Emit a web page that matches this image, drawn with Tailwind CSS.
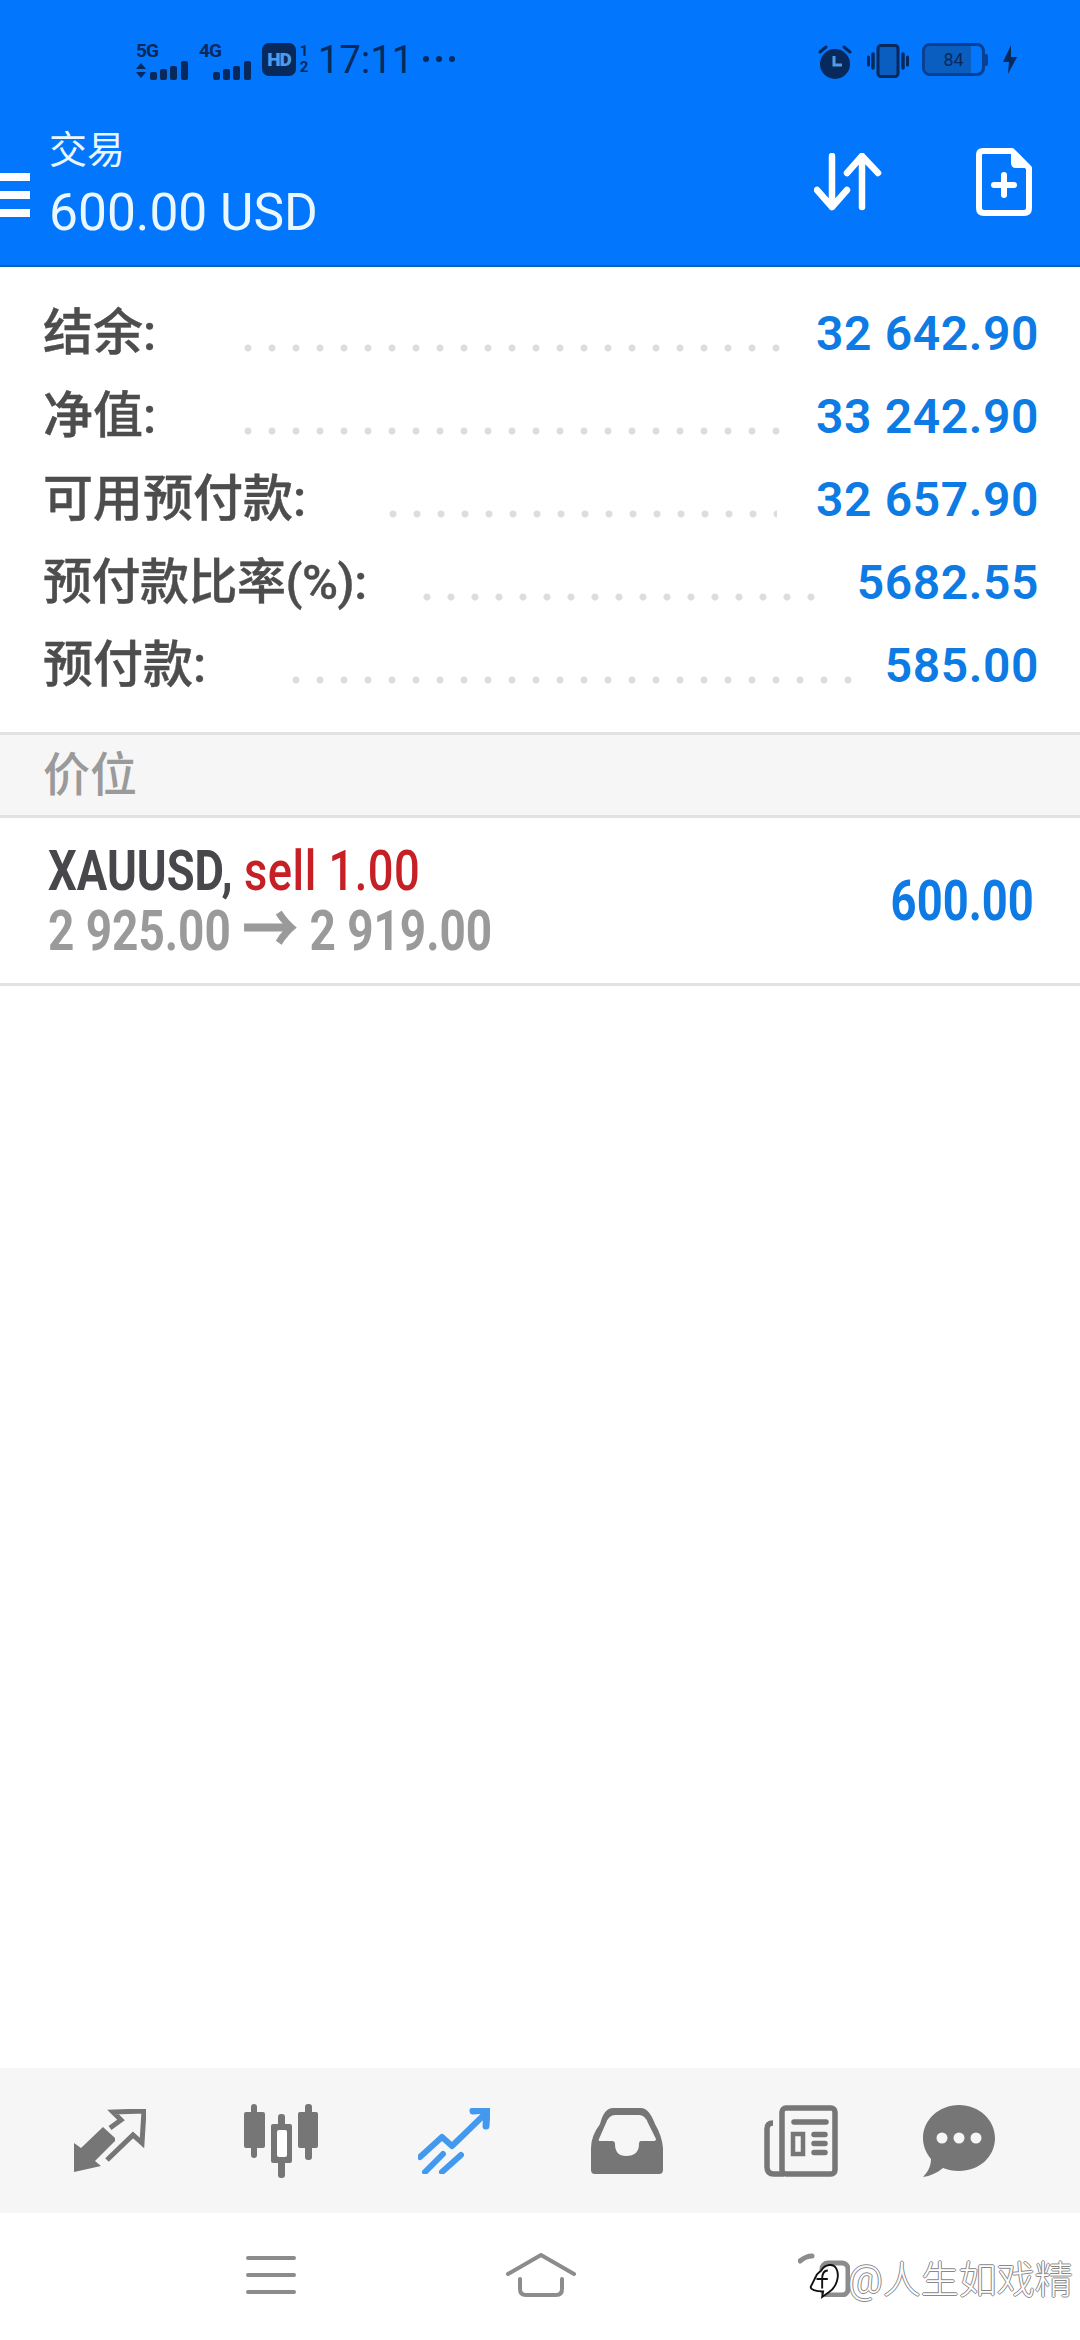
<!DOCTYPE html>
<html lang="zh">
<head>
<meta charset="utf-8">
<title>交易</title>
<script src="https://cdn.jsdelivr.net/npm/@tailwindcss/browser@4"></script>
</head>
<body class="m-0 bg-white">
<div class="w-[1080px] h-[2340px] flex flex-col overflow-hidden relative [font-family:Roboto,'Noto_Sans_CJK_SC',sans-serif]">

	<!-- blue header with status bar -->
	<div class="h-[267px] bg-[#0276fc] border-b-2 border-[#0a62b8] flex flex-col shrink-0">
		<div class="h-[120px] pt-[42px] pl-[136px] pr-[62px] flex justify-between items-start text-[#08295c]">
			<div class="flex items-start">
				<div class="w-[56px] flex flex-col">
					<span class="text-[19px] leading-[17px] font-bold tracking-[-1px] h-[18px]">5G</span>
					<svg width="56" height="20" viewBox="0 0 56 20" fill="#08295c" class="mt-[1px]">
						<path d="M0 8 5 2 10 8ZM0 11 5 17 10 11Z"/>
						<rect x="14" y="11" width="7" height="8" rx="2"/><rect x="24" y="8" width="7" height="11" rx="2"/><rect x="34" y="5" width="7" height="14" rx="2"/><rect x="45" y="0" width="7" height="19" rx="2"/>
					</svg>
				</div>
				<div class="w-[63px] ml-[7px] flex flex-col">
					<span class="text-[19px] leading-[17px] font-bold tracking-[-1px] h-[18px]">4G</span>
					<svg width="56" height="20" viewBox="0 0 56 20" fill="#08295c" class="mt-[1px]">
						<rect x="14" y="11" width="7" height="8" rx="2"/><rect x="24" y="8" width="7" height="11" rx="2"/><rect x="34" y="5" width="7" height="14" rx="2"/><rect x="45" y="0" width="7" height="19" rx="2"/>
					</svg>
				</div>
				<div class="w-[34px] h-[33px] mt-[1px] rounded-[7px] bg-[#08295c] text-[#4f9be8] text-[19px] font-black leading-[33px] text-center tracking-[-1px]">HD</div>
				<div class="w-[12px] ml-[2px] mt-[1px] flex flex-col text-[15px] leading-[16px] font-bold text-center"><span>1</span><span>2</span></div>
				<span class="ml-[8px] mt-[-4px] text-[38px] leading-[44px] tracking-[0.2px]">17:11</span>
				<div class="ml-[9px] mt-[14px] flex gap-[7px]">
					<span class="w-[6px] h-[6px] rounded-full bg-[#08295c]"></span>
					<span class="w-[6px] h-[6px] rounded-full bg-[#08295c]"></span>
					<span class="w-[6px] h-[6px] rounded-full bg-[#08295c]"></span>
				</div>
			</div>
			<div class="flex items-start">
				<svg width="34" height="34" viewBox="0 0 34 34" class="mt-[3px]">
					<circle cx="17" cy="19" r="15" fill="#08295c"/>
					<path d="M2 7 8 2M32 7 26 2" stroke="#08295c" stroke-width="3" stroke-linecap="round"/>
					<path d="M16 11V20H24" fill="none" stroke="#4f9be8" stroke-width="3"/>
				</svg>
				<svg width="42" height="34" viewBox="0 0 42 34" fill="none" class="ml-[15px] mt-[2px]">
					<rect x="11" y="1.5" width="20" height="31" rx="3" fill="#0a5ec0" stroke="#08295c" stroke-width="3"/>
					<path d="M6 10V24M36 10V24" stroke="#08295c" stroke-width="3.5" stroke-linecap="round"/>
					<path d="M1.5 13V21M40.500 13V21" stroke="#08295c" stroke-width="3" stroke-linecap="round"/>
				</svg>
				<div class="ml-[13px] mt-[1px] flex items-center">
					<div class="w-[63px] h-[33px] rounded-[8px] border-[3px] border-[#0a3f92] overflow-hidden relative flex">
						<div class="w-[46px] bg-[#0a5ec0]"></div>
						<span class="absolute inset-0 text-center text-[18px] leading-[27px] text-[#08295c]">84</span>
					</div>
					<div class="w-[3px] h-[12px] bg-[#0a3f92] rounded-r-[2px]"></div>
				</div>
				<svg width="16" height="30" viewBox="0 0 16 30" fill="#08295c" class="ml-[14px] mt-[3px]">
					<path d="M9 0 1 17H7L6 29 15 12H9Z"/>
				</svg>
			</div>
		</div>
		<div class="flex items-center justify-between h-[145px] pr-[48px] relative">
			<div class="flex items-center">
				<div class="w-[30px] h-[44px] flex flex-col justify-between mt-[4px]">
					<span class="h-[8px] bg-white"></span>
					<span class="h-[8px] bg-white"></span>
					<span class="h-[8px] bg-white"></span>
				</div>
				<div class="ml-[19px] flex flex-col text-[#eaf7ff] mt-[-17px]">
					<span class="text-[38px] leading-[44px]">交易</span>
					<span class="text-[51.500px] leading-[54px] mt-[14px]">600.00 USD</span>
				</div>
			</div>
			<div class="flex items-center mt-[-22px]">
				<svg width="68" height="58" viewBox="0 0 68 58" fill="none" stroke="#fff" stroke-width="6.500" stroke-linecap="round" stroke-linejoin="round">
					<path d="M18 3V54M3 37 18 54 33 37"/>
					<path d="M48 3V54M33 20 48 3 64 20"/>
				</svg>
				<svg width="56" height="68" viewBox="0 0 56 68" class="ml-[94px]" fill="none">
					<path d="M7 3H36L53 20V60Q53 65 48 65H8Q3 65 3 60V7Q3 3 7 3Z" stroke="#fff" stroke-width="6" stroke-linejoin="round"/>
					<path d="M35 1 55 20 40 20Q35 20 35 15Z" fill="#fff"/>
					<path d="M28 27V47M18 37H38" stroke="#fff" stroke-width="6" stroke-linecap="round"/>
				</svg>
			</div>
		</div>
	</div>

	<!-- account summary -->
	<div class="h-[465px] pt-[25px] pl-[43px] pr-[41px] shrink-0">
		<div class="h-[83px] flex items-center">
			<span class="w-[193px] text-[50px] font-medium text-[#4d4d4d] [-webkit-text-stroke:0.4px_#4d4d4d]">结余:</span>
			<div class="w-[552px] h-[8px] mt-[28px] bg-[radial-gradient(circle,#dddddd_3px,transparent_4px)] bg-[length:24px_8px]"></div>
			<span class="ml-auto text-[48px] font-semibold text-[#0e7be4] tracking-[0.6px]">32 642.90</span>
		</div>
		<div class="h-[83px] flex items-center">
			<span class="w-[193px] text-[50px] font-medium text-[#4d4d4d] [-webkit-text-stroke:0.4px_#4d4d4d]">净值:</span>
			<div class="w-[552px] h-[8px] mt-[28px] bg-[radial-gradient(circle,#dddddd_3px,transparent_4px)] bg-[length:24px_8px]"></div>
			<span class="ml-auto text-[48px] font-semibold text-[#0e7be4] tracking-[0.6px]">33 242.90</span>
		</div>
		<div class="h-[83px] flex items-center">
			<span class="w-[338px] text-[50px] font-medium text-[#4d4d4d] [-webkit-text-stroke:0.4px_#4d4d4d]">可用预付款:</span>
			<div class="w-[396px] h-[8px] mt-[28px] bg-[radial-gradient(circle,#dddddd_3px,transparent_4px)] bg-[length:24px_8px]"></div>
			<span class="ml-auto text-[48px] font-semibold text-[#0e7be4] tracking-[0.6px]">32 657.90</span>
		</div>
		<div class="h-[83px] flex items-center">
			<span class="w-[372px] text-[49px] font-medium text-[#4d4d4d] [-webkit-text-stroke:0.4px_#4d4d4d] whitespace-nowrap tracking-[-0.5px]">预付款比率(%):</span>
			<div class="w-[408px] h-[8px] mt-[28px] bg-[radial-gradient(circle,#dddddd_3px,transparent_4px)] bg-[length:24px_8px]"></div>
			<span class="ml-auto text-[48px] font-semibold text-[#0e7be4] tracking-[0.6px]">5682.55</span>
		</div>
		<div class="h-[83px] flex items-center">
			<span class="w-[241px] text-[50px] font-medium text-[#4d4d4d] [-webkit-text-stroke:0.4px_#4d4d4d]">预付款:</span>
			<div class="w-[576px] h-[8px] mt-[28px] bg-[radial-gradient(circle,#dddddd_3px,transparent_4px)] bg-[length:24px_8px]"></div>
			<span class="ml-auto text-[48px] font-semibold text-[#0e7be4] tracking-[0.6px]">585.00</span>
		</div>
	</div>

	<!-- positions -->
	<div class="h-[86px] bg-[#f6f6f6] border-y-[3px] border-[#e2e2e2] flex items-center pl-[43px] shrink-0">
		<span class="text-[47px] font-medium text-[#9a9a9a]">价位</span>
	</div>
	<div class="h-[168px] border-b-[3px] border-[#e2e2e2] flex items-center justify-between pl-[48px] pr-[46px] shrink-0">
		<div class="flex flex-col whitespace-nowrap">
			<div class="text-[56px] leading-[60px] origin-left scale-x-[0.81]"><span class="font-bold text-[#48484c]">XAUUSD,</span> <span class="font-medium text-[#c62026] tracking-[0.6px]">sell 1.00</span></div>
			<div class="text-[56px] leading-[60px] font-bold text-[#9a9a9a] origin-left scale-x-[0.82]">2 925.00 <span class="text-[68px] leading-[40px] font-bold align-[-4px] [-webkit-text-stroke:1px_#9a9a9a]">→</span> 2 919.00</div>
		</div>
		<span class="text-[56px] font-bold text-[#0e7be4] origin-right scale-x-[0.81]">600.00</span>
	</div>

	<div class="flex-1"></div>

	<!-- tab bar -->
	<div class="h-[145px] bg-[#f6f6f6] flex items-center pl-[74px] shrink-0">
		<svg width="72" height="64" viewBox="0 0 72 64" fill="#767676">
			<path d="M0 34 7 39 29 18 41 29V32L21 52 27 57 0 63Z"/>
			<path d="M36 19 47 11 39 3 70 2 68 34 59 26 33 51" fill="none" stroke="#767676" stroke-width="5"/>
		</svg>
		<svg width="74" height="74" viewBox="0 0 74 74" fill="#767676" class="ml-[98px]">
			<rect x="7" y="0" width="6" height="54" rx="3"/><rect x="0" y="8" width="21" height="36" rx="2"/>
			<rect x="61" y="0" width="7" height="56" rx="3"/><rect x="54" y="8" width="20" height="36" rx="2"/>
			<rect x="34" y="10" width="7" height="64" rx="3"/><rect x="27" y="20" width="21" height="39" rx="2"/>
			<rect x="33" y="26" width="10" height="27" rx="2" fill="#fff"/>
		</svg>
		<svg width="72" height="66" viewBox="0 0 72 66" fill="none" stroke="#4299ee" stroke-width="6" stroke-linecap="round" stroke-linejoin="round" class="ml-[100px]">
			<path d="M2 49 24 29 34 38 67 6"/>
			<path d="M55 3 69 2 68 18" stroke-width="7"/>
			<path d="M7 64 25 46M24 64 43 47"/>
		</svg>
		<svg width="72" height="66" viewBox="0 0 72 66" class="ml-[101px]">
			<path fill="#767676" fill-rule="evenodd" d="M9 16Q13 0 22 0H50Q58 0 64 16 71 28 72 40V62Q72 66 68 66H4Q0 66 0 62V40Q0 28 9 16ZM24 7H48Q54 7 57 15L65 31Q65 33 62 33H50Q48 33 48 36 48 48 35 48 24 48 24 36 24 33 21 33H9Q7 33 8 31L15 15Q18 7 24 7Z"/>
		</svg>
		<svg width="74" height="72" viewBox="0 0 74 72" fill="none" stroke="#767676" stroke-width="5.500" class="ml-[101px]">
			<rect x="18" y="3" width="53" height="66" rx="4"/>
			<path d="M9 18Q3 18 3 24V62Q3 69 10 69H20"/>
			<path d="M30 17H62" stroke-linecap="round"/>
			<rect x="29" y="29" width="10" height="20" stroke-width="4.500"/>
			<path d="M50 29.500H61M50 38.500H61M50 47.500H61" stroke-linecap="round"/>
		</svg>
		<svg width="72" height="72" viewBox="0 0 72 72" class="ml-[85px]">
			<path fill="#767676" d="M36 0C56 0 72 15 72 33 72 52 56 66 36 66 30 66 25 65 20 63 14 68 7 71 0 72 5 67 8 61 8 54 3 48 0 41 0 33 0 15 16 0 36 0Z"/>
			<circle cx="19" cy="33" r="5.500" fill="#f6f6f6"/><circle cx="36" cy="33" r="5.500" fill="#f6f6f6"/><circle cx="53" cy="33" r="5.500" fill="#f6f6f6"/>
		</svg>
	</div>

	<!-- system nav -->
	<div class="h-[127px] flex items-start pt-[42px] shrink-0">
		<svg width="50" height="40" viewBox="0 0 50 40" class="ml-[246px]" stroke="#8c8c8c" stroke-width="4" stroke-linecap="round">
			<path d="M2 3H48M2 20H48M2 37H48"/>
		</svg>
		<svg width="70" height="44" viewBox="0 0 70 44" fill="none" class="ml-[210px] mt-[-2px]" stroke="#8c8c8c" stroke-width="4" stroke-linecap="round" stroke-linejoin="round">
			<path d="M2 21 35 2 68 21"/>
			<path d="M14 26V36Q14 42 20 42H50Q56 42 56 36V26"/>
		</svg>
		<svg width="52" height="44" viewBox="0 0 52 44" fill="none" class="ml-[222px] mt-[-2px]" stroke="#8c8c8c" stroke-width="5" stroke-linecap="round">
			<path d="M2 8Q8 3 14 3"/>
			<rect x="24" y="10" width="26" height="32" rx="6"/>
		</svg>
	</div>

	<!-- watermark -->
	<div class="absolute left-[808px] top-[2258px] flex items-center">
		<svg width="34" height="40" viewBox="0 0 36 40" fill="#fff" stroke="#111" stroke-width="2">
			<path d="M14 10C18 3 27 2 30 8 34 16 30 28 22 33L15 38 16 32C8 32 2 30 3 27L8 17C9 13 12 12 14 10Z"/>
			<path d="M21 10C16 10 15 14 15 19V29M9 19H21" fill="none"/>
		</svg>
		<span class="ml-[6px] text-[38px] leading-[44px] font-light text-white [text-shadow:1px_0_0_#888,-1px_0_0_#888,0_1px_0_#888,0_-1px_0_#888] whitespace-nowrap">@人生如戏精</span>
	</div>
</div>
</body>
</html>
